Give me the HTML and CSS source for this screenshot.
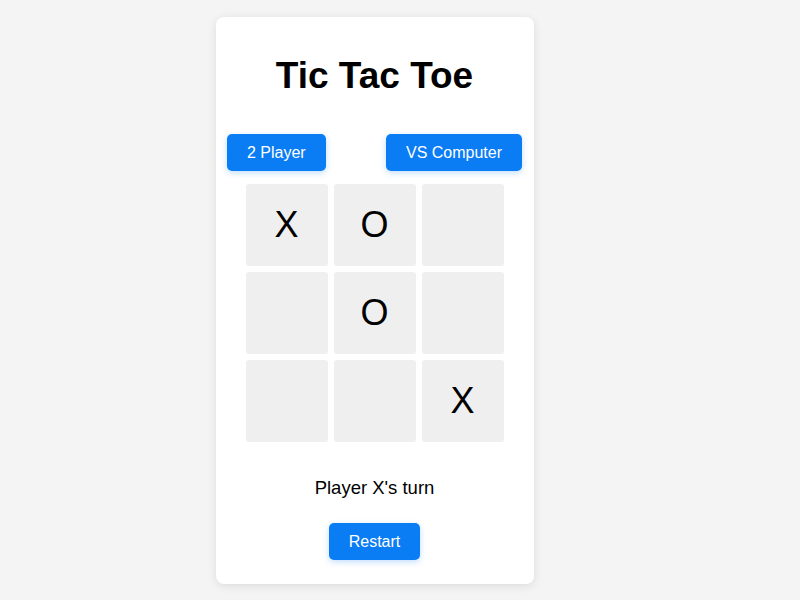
FILE: index.html
```html
<!DOCTYPE html>
<html lang="en">
<head>
<meta charset="utf-8">
<title>Tic Tac Toe</title>
<link rel="stylesheet" href="styles.css">
</head>
<body>
  <main class="game">
    <h1 class="title">Tic Tac Toe</h1>
    <div class="modes">
      <button class="btn">2 Player</button>
      <button class="btn">VS Computer</button>
    </div>
    <div class="board">
      <div class="cell">X</div>
      <div class="cell">O</div>
      <div class="cell"></div>
      <div class="cell"></div>
      <div class="cell">O</div>
      <div class="cell"></div>
      <div class="cell"></div>
      <div class="cell"></div>
      <div class="cell">X</div>
    </div>
    <p class="status">Player X's turn</p>
    <button class="btn restart">Restart</button>
  </main>
</body>
</html>
```
FILE: styles.css
```css
html, body {
  margin: 0;
  padding: 0;
}

body {
  background: #f4f4f4;
  font-family: "Liberation Sans", Arial, sans-serif;
  color: #000;
  height: 600px;
}

.game {
  width: 318px;
  box-sizing: border-box;
  margin: 17px 0 0 216px;
  padding: 38px 12px 24px 11px;
  background: #fff;
  border-radius: 8px;
  box-shadow: 0 2px 10px rgba(0, 0, 0, 0.1);
  display: flex;
  flex-direction: column;
  align-items: center;
}

.title {
  margin: 0;
  font-size: 37px;
  font-weight: bold;
  line-height: 41px;
}

.modes {
  align-self: stretch;
  display: flex;
  justify-content: space-between;
  margin-top: 38px;
}

.btn {
  font-family: "Liberation Sans", Arial, sans-serif;
  font-size: 16px;
  line-height: 18px;
  padding: 10px 20px 9px;
  color: #fff;
  background: #0a7cf4;
  border: none;
  border-radius: 5px;
  box-shadow: 0 2px 6px rgba(10, 124, 244, 0.25);
  cursor: pointer;
}

.board {
  margin-top: 13px;
  display: grid;
  grid-template-columns: repeat(3, 82px);
  grid-auto-rows: 82px;
  gap: 6px;
}

.cell {
  background: #efefef;
  border-radius: 3px;
  display: flex;
  align-items: center;
  justify-content: center;
  font-size: 36px;
}

.status {
  margin: 35px 0 0;
  font-size: 18.5px;
  line-height: 21px;
}

.restart {
  margin-top: 25px;
}
```
